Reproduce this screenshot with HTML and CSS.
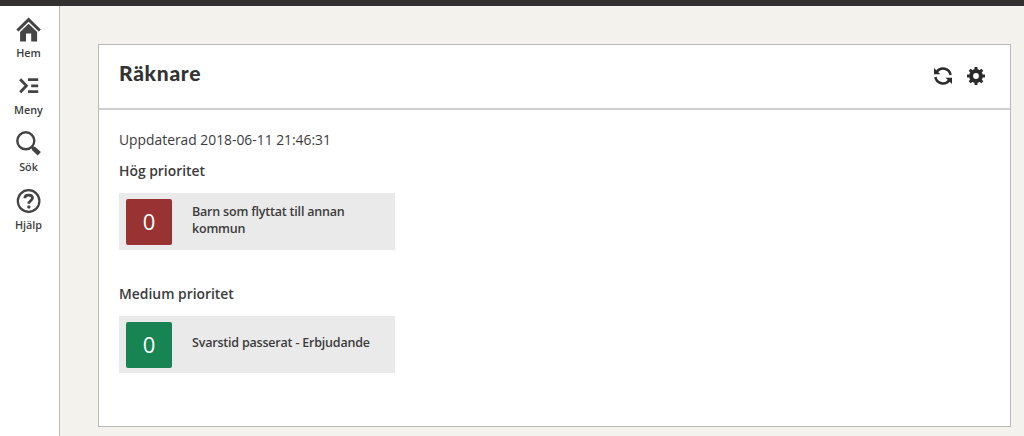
FILE: index.html
```html
<!DOCTYPE html>
<html lang="sv">
<head>
  <meta charset="UTF-8">
  <title>Räknare</title>
  <link rel="stylesheet" href="styles.css">
</head>
<body>

  <div class="topbar"></div>

  <div class="layout">
    <nav class="sidebar">
      <a class="nav-item">
        <svg class="nav-icon" viewBox="0 0 26 26">
          <path d="M1.4 13.5 L12.6 2.7 L23.8 13.5" fill="none" stroke="#444" stroke-width="3"/>
          <path d="M12.6 6.8 L21.1 15 V24.5 H15.2 V16.5 H10 V24.5 H4.1 V15 Z" fill="#444"/>
        </svg>
        <span class="nav-label">Hem</span>
      </a>
      <a class="nav-item">
        <svg class="nav-icon" viewBox="0 0 26 26">
          <path d="M4.2 5.3 L10.4 11.8 L4.2 18.3" fill="none" stroke="#444" stroke-width="2.8"/>
          <path d="M12 5.7 H22.2 M15.2 11.8 H22.2 M12 17.7 H22.2" fill="none" stroke="#444" stroke-width="2.8"/>
        </svg>
        <span class="nav-label">Meny</span>
      </a>
      <a class="nav-item">
        <svg class="nav-icon" viewBox="0 0 26 26">
          <circle cx="9.8" cy="9.8" r="8.5" fill="none" stroke="#444" stroke-width="2.4"/>
          <path d="M15.6 15.6 L18.6 18.4" stroke="#444" stroke-width="2.8"/>
          <path d="M17.2 17.1 L23.3 22.8" stroke="#444" stroke-width="4.6"/>
        </svg>
        <span class="nav-label">Sök</span>
      </a>
      <a class="nav-item">
        <svg class="nav-icon" viewBox="0 0 26 26">
          <circle cx="12.6" cy="12" r="10.8" fill="none" stroke="#444" stroke-width="2.2"/>
          <path d="M8.8 9.2 C8.8 7 10.4 6.1 12.6 6.1 C14.9 6.1 16.5 7.2 16.5 9.1 C16.5 11.6 12.8 11.7 12.8 14.8" fill="none" stroke="#444" stroke-width="2.7"/>
          <rect x="11.3" y="16.6" width="3.1" height="2.9" rx="1" fill="#444"/>
        </svg>
        <span class="nav-label">Hjälp</span>
      </a>
    </nav>

    <main class="content">
      <section class="panel">
        <header class="panel-header">
          <h1>Räknare</h1>
          <div class="panel-actions">
            <svg class="action-icon" viewBox="0 0 20 20">
              <path d="M3.8 5.8 A7.7 7.7 0 0 1 17.6 9" fill="none" stroke="#2b2b2b" stroke-width="2.5"/>
              <path d="M1 2 V8.2 H7.4 Z" fill="#2b2b2b"/>
              <path d="M16.2 14.2 A7.7 7.7 0 0 1 2.4 11" fill="none" stroke="#2b2b2b" stroke-width="2.5"/>
              <path d="M19 18 V11.8 H12.6 Z" fill="#2b2b2b"/>
            </svg>
            <svg class="action-icon" viewBox="0 0 20 20">
              <circle cx="10" cy="10" r="4.9" fill="none" stroke="#2b2b2b" stroke-width="4"/>
              <g stroke="#2b2b2b" stroke-width="3">
                <path d="M10 1 V4.5 M10 15.5 V19 M1 10 H4.5 M15.5 10 H19"/>
                <path d="M3.7 3.7 L6.2 6.2 M13.8 13.8 L16.3 16.3 M3.7 16.3 L6.2 13.8 M13.8 6.2 L16.3 3.7"/>
              </g>
            </svg>
          </div>
        </header>

        <div class="panel-body">
          <p class="updated">Uppdaterad 2018-06-11 21:46:31</p>

          <div class="group">
            <h2>Hög prioritet</h2>
            <div class="counter">
              <span class="count high">0</span>
              <span class="counter-text">Barn som flyttat till annan kommun</span>
            </div>
          </div>

          <div class="group">
            <h2>Medium prioritet</h2>
            <div class="counter">
              <span class="count medium">0</span>
              <span class="counter-text">Svarstid passerat - Erbjudande</span>
            </div>
          </div>
        </div>
      </section>
    </main>
  </div>

</body>
</html>
```

FILE: styles.css
```css
* {
  box-sizing: border-box;
}
body {
  margin: 0;
  height: 436px;
  overflow: hidden;
  display: flex;
  flex-direction: column;
  background-color: #f3f2ed;
  color: #3c3c3c;
  font-family: "Open Sans", "Noto Sans", sans-serif;
}
.topbar {
  height: 6px;
  background-color: #333130;
}
.layout {
  display: flex;
  flex: 1;
}
.sidebar {
  width: 60px;
  padding: 11px 2px 0 0;
  background-color: #fff;
  border-right: 1px solid #b9b9b9;
}
.nav-item {
  display: flex;
  flex-direction: column;
  align-items: center;
  height: 57.2px;
}
.nav-icon {
  width: 26px;
  height: 26px;
}
.nav-label {
  margin-top: 2px;
  font-size: 10.8px;
  font-weight: 600;
  line-height: 15px;
}
.content {
  flex: 1;
  padding: 38px 13px 0 38px;
}
.panel {
  height: 383px;
  background-color: #fff;
  border: 1px solid #b9b9b9;
}
.panel-header {
  display: flex;
  justify-content: space-between;
  align-items: center;
  height: 65px;
  padding: 0 24.5px 2px 20px;
  border-bottom: 2px solid #cfcfcf;
}
.panel-header h1 {
  margin: 0 0 5px;
  font-family: Lato, sans-serif;
  font-size: 21px;
  font-weight: 900;
  line-height: 26px;
  letter-spacing: 0.7px;
  color: #333;
}
.panel-actions {
  display: flex;
  gap: 13px;
}
.action-icon {
  width: 20px;
  height: 20px;
}
.panel-body {
  padding: 20px;
}
.updated {
  margin: 0;
  font-size: 13.85px;
  line-height: 20px;
}
.group {
  margin-top: 11px;
  height: 112px;
}
.group h2 {
  margin: 0 0 12px;
  font-size: 13.9px;
  font-weight: 600;
  line-height: 20px;
}
.counter {
  display: flex;
  align-items: center;
  width: 276px;
  height: 57px;
  padding: 0 20px 0 7px;
  background-color: #eaeaea;
}
.count {
  flex: none;
  width: 46px;
  height: 46px;
  border-radius: 2px;
  color: #fff;
  font-size: 22px;
  line-height: 44px;
  text-align: center;
}
.count.high {
  background-color: #993233;
}
.count.medium {
  background-color: #188353;
}
.counter-text {
  margin: 0 0 2px 20px;
  font-size: 12.5px;
  font-weight: 600;
  line-height: 16.5px;
  letter-spacing: -0.2px;
}
```
